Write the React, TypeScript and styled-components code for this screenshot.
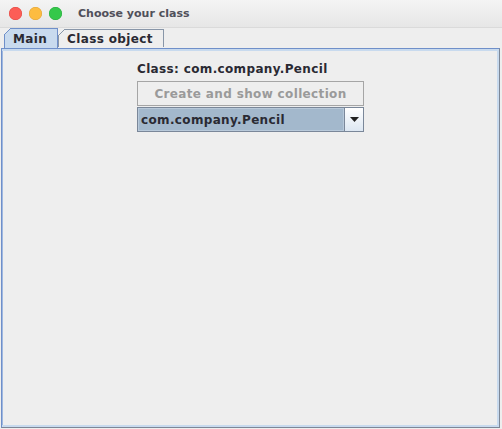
import React from "react";
import styled, { createGlobalStyle } from "styled-components";

const Global = createGlobalStyle`
  html, body { margin: 0; padding: 0; background: #eeeeee; }
  body { font-family: "DejaVu Sans", "Liberation Sans", sans-serif; }
`;

const Window = styled.div`
  width: 502px;
  height: 429px;
  display: flex;
  flex-direction: column;
  background: #eeeeee;
  box-sizing: border-box;
  overflow: hidden;
`;

const TitleBar = styled.div`
  height: 28px;
  flex: none;
  display: flex;
  align-items: center;
  padding-left: 9px;
  gap: 7px;
  background: linear-gradient(#f4f4f4, #e6e6e6);
  border-bottom: 1px solid #dadada;
  box-sizing: border-box;
`;

const Light = styled.span<{ $c: string; $b: string }>`
  width: 13px;
  height: 13px;
  border-radius: 50%;
  background: ${(p) => p.$c};
  box-shadow: inset 0 0 0 0.5px ${(p) => p.$b};
`;

const Title = styled.span`
  margin-left: 9px;
  font-size: 11px;
  font-weight: bold;
  color: #50505a;
`;

const TabStrip = styled.div`
  height: 20px;
  flex: none;
  display: flex;
  align-items: flex-end;
  padding-left: 4px;
  box-sizing: border-box;
`;

const Tab = styled.div<{ $active?: boolean }>`
  position: relative;
  height: ${(p) => (p.$active ? "20px" : "18px")};
  box-sizing: border-box;
  padding: ${(p) => (p.$active ? "0 10px 0 8px" : "0 10px 0 8px")};
  display: flex;
  align-items: center;
  font-size: 12px;
  font-weight: bold;
  letter-spacing: 0.35px;
  color: #2a2a33;
  background: ${(p) => (p.$active ? "#c8daee" : "#eeeeee")};
  border: 1px solid ${(p) => (p.$active ? "#6f8fc9" : "#8896a8")};
  border-bottom: none;
  margin-bottom: ${(p) => (p.$active ? "0" : "1px")};
  &::before {
    content: "";
    position: absolute;
    top: -1px;
    left: -1px;
    width: 7px;
    height: 7px;
    background: linear-gradient(
      to bottom right,
      #eeeeee 0,
      #eeeeee calc(50% - 0.6px),
      ${(p) => (p.$active ? "#6f8fc9" : "#8896a8")} calc(50% - 0.6px),
      ${(p) => (p.$active ? "#6f8fc9" : "#8896a8")} calc(50% + 0.6px),
      ${(p) => (p.$active ? "#c8daee" : "#eeeeee")} calc(50% + 0.6px)
    );
  }
`;

const Panel = styled.div`
  flex: 1;
  margin: 0 2px 1px 1px;
  border: 1px solid;
  border-color: #6f8fc9 #7d8797 #7d8797 #6f8fc9;
  box-shadow: inset 0 2px 0 #c8daee, inset -2px 0 0 #c8daee, inset 0 -2px 0 #c8daee,
    inset 1px 0 0 #9fb8e0;
  display: flex;
  flex-direction: column;
  align-items: center;
  padding-top: 12px;
  box-sizing: border-box;
`;

const Column = styled.div`
  width: 227px;
  display: flex;
  flex-direction: column;
`;

const Label = styled.div`
  height: 17px;
  margin-bottom: 3px;
  font-size: 12px;
  font-weight: bold;
  letter-spacing: 0.35px;
  color: #2a2a33;
  line-height: 17px;
  white-space: nowrap;
`;

const Button = styled.button`
  height: 25px;
  box-sizing: border-box;
  border: 1px solid #a5a5a5;
  background: #eeeeee;
  color: #9a9a9a;
  font-family: "DejaVu Sans", "Liberation Sans", sans-serif;
  font-size: 12px;
  font-weight: bold;
  letter-spacing: 0.35px;
  padding: 0;
  margin: 0 0 1px 0;
`;

const Combo = styled.div`
  height: 25px;
  box-sizing: border-box;
  border: 1px solid #7a8799;
  display: flex;
`;

const ComboValue = styled.div`
  flex: 1;
  background: #a3b8cc;
  border: 1px solid #b8c9da;
  display: flex;
  align-items: center;
  padding-left: 2px;
  font-size: 12px;
  font-weight: bold;
  letter-spacing: 0.35px;
  color: #2a2a33;
  white-space: nowrap;
`;

const ArrowButton = styled.div`
  width: 18px;
  flex: none;
  border-left: 1px solid #7a8799;
  background: linear-gradient(#ffffff, #dde7f2);
  display: flex;
  align-items: center;
  justify-content: center;
`;

export default function App() {
  return (
    <>
      <Global />
      <Window>
        <TitleBar>
          <Light $c="#fc5d56" $b="#e0443e" />
          <Light $c="#fdbc40" $b="#dea236" />
          <Light $c="#34c84a" $b="#24a93a" />
          <Title>Choose your class</Title>
        </TitleBar>
        <TabStrip>
          <Tab $active>Main</Tab>
          <Tab>Class object</Tab>
        </TabStrip>
        <Panel>
          <Column>
            <Label>Class: com.company.Pencil</Label>
            <Button disabled>Create and show collection</Button>
            <Combo>
              <ComboValue>com.company.Pencil</ComboValue>
              <ArrowButton>
                <svg width="9" height="5" viewBox="0 0 9 5">
                  <path d="M0 0H9L4.5 5Z" fill="#222" />
                </svg>
              </ArrowButton>
            </Combo>
          </Column>
        </Panel>
      </Window>
    </>
  );
}
